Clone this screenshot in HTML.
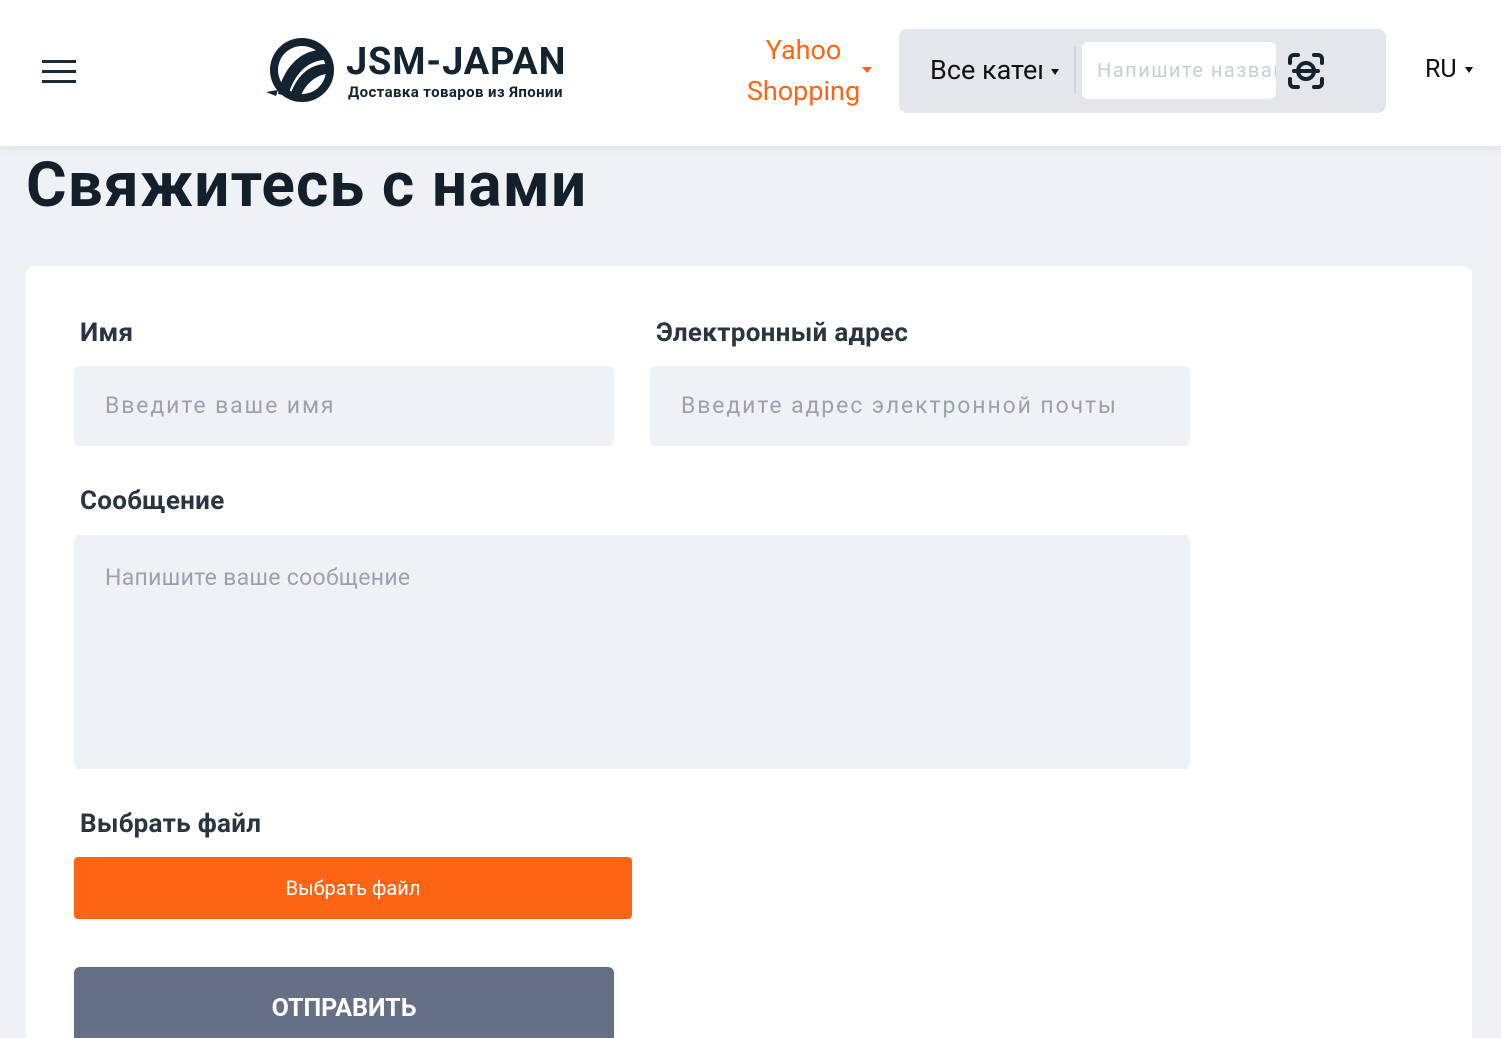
<!DOCTYPE html><html><head><meta charset="utf-8"><style>
*{box-sizing:border-box;margin:0;padding:0}
html,body{width:1501px;height:1038px;overflow:hidden}
body{background:#eef2f5;font-family:"Roboto","Liberation Sans",sans-serif;color:#1d2a35;position:relative}
.hdr{position:absolute;left:0;top:0;width:1501px;height:146px;background:#fff;box-shadow:0 2px 10px rgba(0,0,0,.08)}
.a{position:absolute}
h1{position:absolute;left:26px;top:149px;font-size:62px;font-weight:bold;color:#13202b;letter-spacing:1.2px}
.card{position:absolute;left:26px;top:266px;width:1446px;height:772px;background:#fff;border-radius:8px 8px 0 0}
.lbl{position:absolute;font-size:26px;font-weight:bold;color:#2a3540;letter-spacing:.3px}
.inp{position:absolute;background:#eef2f5;border-radius:6px;color:#9aa3ad;font-size:23px;letter-spacing:1.9px;padding-left:31px}
</style></head><body>
<div class="hdr">
 <div class="a" style="left:42px;top:60px;width:34px;height:3px;background:#1d2a35;box-shadow:0 10px 0 #1d2a35,0 20px 0 #1d2a35"></div>
 <svg class="a" style="left:264px;top:34px" width="74" height="72" viewBox="0 0 74 72"><circle cx="38" cy="36" r="32" fill="#13232f"/><circle cx="38" cy="36" r="24" fill="#fff"/><path d="M14 60 C20 30 40 14 62 16 L62 26 C44 26 30 40 24 62Z" fill="#13232f"/><path d="M26 62 C32 42 46 30 62 30 L62 40 C50 42 40 52 36 64Z" fill="#13232f"/><path d="M2 58 L14 56 L12 62Z" fill="#13232f"/></svg>
 <div class="a" style="left:346px;top:40px;font-size:38px;font-weight:bold;color:#13232f;letter-spacing:.8px">JSM-JAPAN</div>
 <div class="a" style="left:348px;top:83px;font-size:15px;font-weight:bold;color:#13232f;letter-spacing:.4px">Доставка товаров из Японии</div>
 <div class="a" style="left:746px;top:30px;width:115px;text-align:center;font-size:27px;line-height:41px;color:#fd6515">Yahoo Shopping</div>
 <div class="a" style="left:862px;top:67px;border:5px solid transparent;border-top:6px solid #fd6515"></div>
 <div class="a" style="left:899px;top:29px;width:487px;height:84px;background:#e3e7ec;border-radius:8px">
  <div class="a" style="left:31px;top:25px;font-size:27px;color:#111;width:112px;overflow:hidden;white-space:nowrap">Все категории</div>
  <div class="a" style="left:152px;top:40px;border:4px solid transparent;border-top:6px solid #111"></div>
  <div class="a" style="left:175px;top:18px;width:2px;height:46px;background:#cfd4da"></div>
  <div class="a" style="left:183px;top:13px;width:194px;height:57px;background:#fff;border-radius:6px;overflow:hidden;white-space:nowrap;padding:16px 0 0 15px;color:#c9ced4;font-size:20px;letter-spacing:1.5px">Напишите название</div>
  <svg class="a" style="left:387px;top:22px" width="40" height="40" viewBox="0 0 40 40" fill="none" stroke="#13232f" stroke-width="4" stroke-linecap="round"><path d="M4 12V8a4 4 0 0 1 4-4h4M28 4h4a4 4 0 0 1 4 4v4M36 28v4a4 4 0 0 1-4 4h-4M12 36H8a4 4 0 0 1-4-4v-4"/><circle cx="20" cy="20" r="8"/><path d="M8 20h24"/></svg>
 </div>
 <div class="a" style="left:1425px;top:55px;font-size:25px;color:#111">RU</div>
 <div class="a" style="left:1465px;top:67px;border:4px solid transparent;border-top:6px solid #111"></div>
</div>
<h1>Свяжитесь с нами</h1>
<div class="card"></div>
<div class="lbl" style="left:80px;top:318px">Имя</div>
<div class="lbl" style="left:656px;top:318px">Электронный адрес</div>
<div class="inp" style="left:74px;top:366px;width:540px;height:80px;line-height:80px">Введите ваше имя</div>
<div class="inp" style="left:650px;top:366px;width:540px;height:80px;line-height:80px">Введите адрес электронной почты</div>
<div class="lbl" style="left:80px;top:486px">Сообщение</div>
<div class="inp" style="left:74px;top:535px;width:1116px;height:234px;padding-top:29px;font-size:23px;letter-spacing:.3px">Напишите ваше сообщение</div>
<div class="lbl" style="left:80px;top:809px">Выбрать файл</div>
<div class="a" style="left:74px;top:857px;width:558px;height:62px;background:#fd6515;border-radius:4px;color:#fff;font-size:20px;text-align:center;line-height:62px">Выбрать файл</div>
<div class="a" style="left:74px;top:967px;width:540px;height:71px;background:#667085;border-radius:6px 6px 0 0;color:#fff;font-size:25px;font-weight:bold;text-align:center;padding-top:27px">ОТПРАВИТЬ</div>
</body></html>
